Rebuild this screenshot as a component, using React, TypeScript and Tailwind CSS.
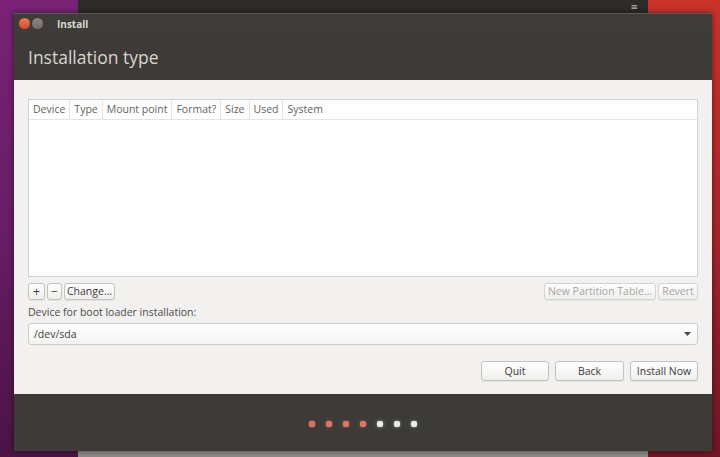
const font = { fontFamily: '"Open Sans", "DejaVu Sans", sans-serif' };

const columns = ["Device", "Type", "Mount point", "Format?", "Size", "Used", "System"];

const steps = [true, true, true, true, false, false, false];

function Button({
  children,
  className = "",
  disabled = false,
}: {
  children: React.ReactNode;
  className?: string;
  disabled?: boolean;
}) {
  return (
    <button
      className={`flex items-center justify-center rounded-[3px] border bg-gradient-to-b from-white to-[#efeeec] text-[10.5px] leading-none shadow-[0_1px_0_rgba(0,0,0,0.06)] ${
        disabled ? "border-[#d6d4d1] text-[#a7a5a2]" : "border-[#c4c2bf] text-[#3c3c3c]"
      } ${className}`}
    >
      {children}
    </button>
  );
}

export default function App() {
  return (
    <div className="relative flex h-[457px] w-[720px] overflow-hidden" style={font}>
      {/* desktop behind the window */}
      <div className="w-[78px] bg-gradient-to-b from-[#7a2276] via-[#691d65] to-[#4a1446]" />
      <div className="flex flex-1 flex-col bg-[#5e2a4a]">
        <div className="flex h-[13px] items-center justify-end bg-[#2e2c29] pr-[10px]">
          <span className="text-[9px] leading-none text-[#bdbab4]">≡</span>
        </div>
        <div className="flex-1" />
        <div className="h-[6px] bg-[#8d8b88]" />
      </div>
      <div className="w-[72px] bg-gradient-to-b from-[#c9332a] via-[#a8262a] to-[#6e1627]" />

      {/* installer window */}
      <div className="absolute left-[14px] top-[13px] flex h-[438px] w-[698px] flex-col shadow-[0_0_6px_rgba(0,0,0,0.5)]">
        <div className="flex h-[20px] items-center gap-[2px] border-t border-[#5a5954] bg-[#3d3c38] pl-[5px]">
          <span className="h-[11px] w-[11px] rounded-full bg-gradient-to-b from-[#f07a55] to-[#d9482a]" />
          <span className="h-[11px] w-[11px] rounded-full bg-gradient-to-b from-[#8a8883] to-[#6d6b67]" />
          <span className="ml-[12px] text-[10px] font-bold leading-none text-[#dcd8cf]">Install</span>
        </div>
        <div className="flex h-[47px] items-center bg-[#3c3b37] pl-[14px] pt-[2px]">
          <span className="text-[17.5px] leading-none text-[#d9d5cc]">Installation type</span>
        </div>

        <div className="flex flex-1 flex-col bg-[#f2f1f0] px-[14px] pt-[19px]">
          <div className="flex h-[178px] flex-col border border-[#d3d1ce] bg-white">
            <div className="flex h-[20px] items-center border-b border-[#e6e4e1]">
              {columns.map((c) => (
                <span
                  key={c}
                  className="flex h-full items-center border-r border-[#e6e4e1] px-[4px] text-[10.5px] leading-none text-[#5f5f5c] last:border-r-0"
                >
                  {c}
                </span>
              ))}
            </div>
            <div className="flex-1" />
          </div>

          <div className="mt-[6px] flex h-[17px] justify-between">
            <div className="flex gap-[2px]">
              <Button className="w-[17px] text-[12px]">+</Button>
              <Button className="w-[15px] text-[12px]">−</Button>
              <Button className="w-[51px]">Change…</Button>
            </div>
            <div className="flex gap-[2px]">
              <Button disabled className="w-[112px]">
                New Partition Table…
              </Button>
              <Button disabled className="w-[40px]">
                Revert
              </Button>
            </div>
          </div>

          <div className="mt-[5px] text-[10.5px] leading-[14px] text-[#4b4b49]">
            Device for boot loader installation:
          </div>

          <div className="mt-[4px] flex h-[22px] items-center justify-between rounded-[3px] border border-[#cfcdca] bg-gradient-to-b from-white to-[#f4f3f2] pl-[5px] pr-[6px]">
            <span className="text-[10.5px] leading-none text-[#3c3c3c]">/dev/sda</span>
            <svg width="7" height="4" viewBox="0 0 7 4">
              <path d="M0 0h7L3.5 4z" fill="#4a4a48" />
            </svg>
          </div>

          <div className="mt-[16px] flex h-[20px] justify-end gap-[6px]">
            <Button className="w-[68px]">Quit</Button>
            <Button className="w-[69px]">Back</Button>
            <Button className="w-[68px] border-[#8f8d89]">Install Now</Button>
          </div>
        </div>

        <div className="flex h-[57px] items-start justify-center gap-[11px] bg-[#3c3b37] pt-[27px]">
          {steps.map((done, i) => (
            <span
              key={i}
              className={`h-[6px] w-[6px] rounded-[2px] ${
                done
                  ? "bg-[#e27560] shadow-[0_0_3px_rgba(226,117,96,0.7)]"
                  : "bg-[#ecebe8] shadow-[0_0_3px_rgba(236,235,232,0.6)]"
              }`}
            />
          ))}
        </div>
      </div>
    </div>
  );
}
